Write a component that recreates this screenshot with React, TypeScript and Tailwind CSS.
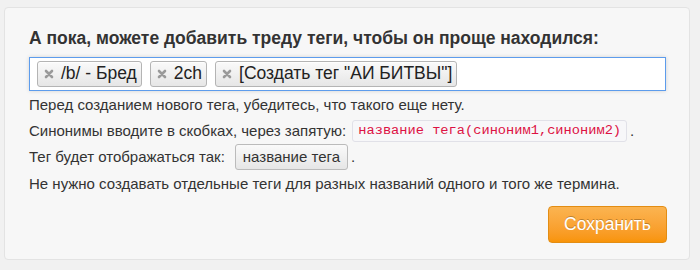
const tags = ['/b/ - Бред', '2ch', '[Создать тег "АИ БИТВЫ"]'];

function Tag({ label }: { label: string }) {
  return (
    <span className="flex h-[26px] items-center gap-[7px] rounded-[3px] border border-[#b4b4b4] bg-gradient-to-b from-[#fafafa] to-[#e6e6e6] pl-[6px] pr-[4px] text-[17.5px] leading-none text-[#222] shadow-[inset_0_1px_0_rgba(255,255,255,0.8)]">
      <svg viewBox="0 0 10 10" className="h-[10px] w-[10px]" fill="none" stroke="#9a9a9a" strokeWidth="2.6" strokeLinecap="round">
        <path d="M2 2l6 6M8 2l-6 6" />
      </svg>
      {label}
    </span>
  );
}

export default function App() {
  return (
    <div className="h-[270px] w-[700px] bg-[#f1f1f1] pl-[4px] pt-[7px] font-['Liberation_Sans',Arial,sans-serif] text-[#333]">
      <div className="flex h-[253px] w-[686px] flex-col rounded-[4px] border border-[#e3e3e3] bg-[#f7f7f7] pl-[24px] pr-[22px] pt-[19px]">
        <h2 className="text-[17.5px] font-bold leading-[22px] text-[#333]">
          А пока, можете добавить треду теги, чтобы он проще находился:
        </h2>

        <div className="mt-[8px] flex h-[34px] w-[637px] items-center gap-[8px] border border-[#5d9cec] bg-white pl-[7px] shadow-[0_0_4px_rgba(0,0,0,0.15)]">
          {tags.map((t) => (
            <Tag key={t} label={t} />
          ))}
        </div>

        <div className="mt-[4px] flex flex-col text-[15px] leading-[20px]">
          <p>Перед созданием нового тега, убедитесь, что такого еще нету.</p>
          <p className="mt-[5px] flex items-center">
            Синонимы вводите в скобках, через запятую:
            <code className="ml-[6px] rounded-[3px] border border-[#e1e1e8] bg-[#f7f7f9] px-[5px] py-[1px] font-['Liberation_Mono',monospace] text-[13.7px] leading-[18px] text-[#dd1144]">
              название тега(синоним1,синоним2)
            </code>
            <span className="ml-[3px]">.</span>
          </p>
          <p className="mt-[2px] flex items-center">
            Тег будет отображаться так:
            <span className="ml-[10px] flex h-[26px] items-center rounded-[3px] border border-[#bbb] bg-gradient-to-b from-[#fafafa] to-[#e6e6e6] px-[7px] text-[15px] text-[#333]">
              название тега
            </span>
            <span className="ml-[3px]">.</span>
          </p>
          <p className="mt-[4px]">Не нужно создавать отдельные теги для разных названий одного и того же термина.</p>
        </div>

        <div className="mt-[12px] flex justify-end">
          <button className="h-[37px] w-[119px] rounded-[4px] border border-[#e38d13] bg-gradient-to-b from-[#fbb450] to-[#f89406] text-[17.5px] text-white [text-shadow:0_-1px_0_rgba(0,0,0,0.25)]">
            Сохранить
          </button>
        </div>
      </div>
    </div>
  );
}
